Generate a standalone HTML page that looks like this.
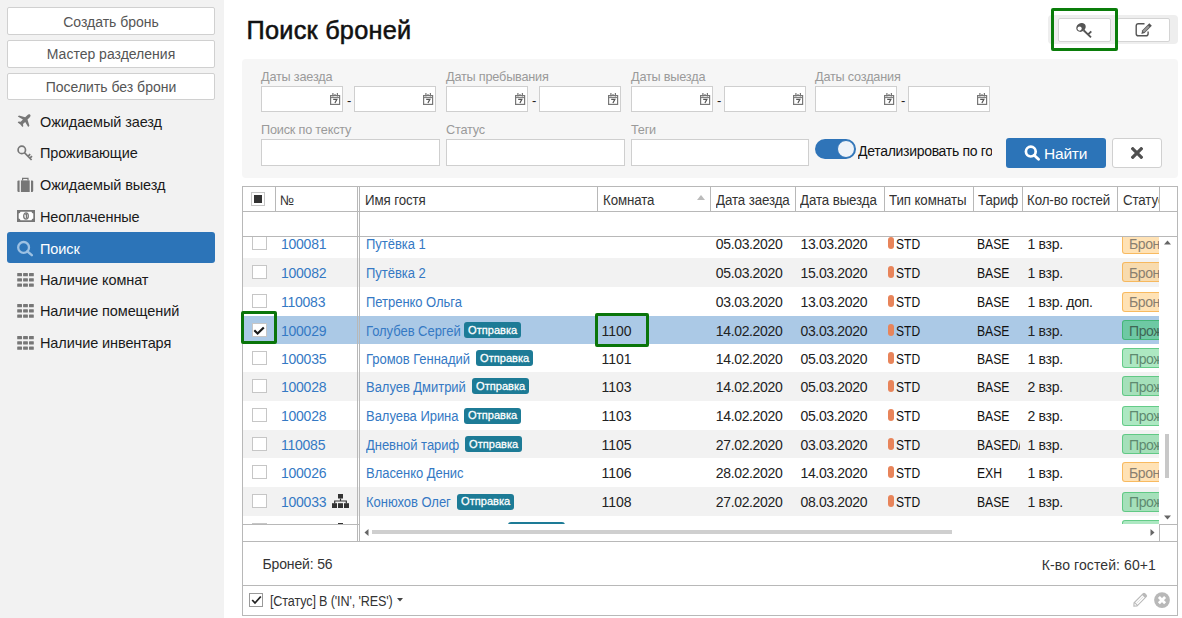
<!DOCTYPE html><html><head><meta charset="utf-8"><style>
html,body{margin:0;padding:0;}
body{width:1182px;height:618px;overflow:hidden;position:relative;background:#fff;font-family:"Liberation Sans",sans-serif;}
.t{position:absolute;white-space:nowrap;}
.b{position:absolute;box-sizing:border-box;}
svg{position:absolute;}
</style></head><body>
<div class="b" style="left:0px;top:0px;width:224px;height:618px;background:#f2f2f2"></div>
<div class="b" style="left:7px;top:7px;width:208px;height:28px;background:#fff;border:1px solid #d0d0d0;border-radius:2px"></div>
<div class="t" style="left:7px;width:208px;text-align:center;top:13.8px;font-size:14px;line-height:16px;color:#555">Создать бронь</div>
<div class="b" style="left:7px;top:40px;width:208px;height:28px;background:#fff;border:1px solid #d0d0d0;border-radius:2px"></div>
<div class="t" style="left:7px;width:208px;text-align:center;top:46.2px;font-size:14px;line-height:16px;color:#555">Мастер разделения</div>
<div class="b" style="left:7px;top:73px;width:208px;height:27px;background:#fff;border:1px solid #d0d0d0;border-radius:2px"></div>
<div class="t" style="left:7px;width:208px;text-align:center;top:78.6px;font-size:14px;line-height:16px;color:#555">Поселить без брони</div>
<div class="b" style="left:7px;top:232px;width:208px;height:31px;background:#2c74b8;border-radius:3px"></div>
<div class="t" style="left:40px;top:114px;font-size:14.5px;line-height:16px;color:#1a1a1a;font-weight:normal;letter-spacing:-0.1px;">Ожидаемый заезд</div>
<svg style="left:17px;top:114px" width="14" height="14" viewBox="0 0 14 14"><path fill="#777" d="M13.2 0.8 C12.4 0 11.2 0.3 10.3 1.2 L8.2 3.3 L2 1.4 L0.8 2.6 L5.9 5.6 L3.7 7.8 L1.6 7.5 L0.7 8.4 L3.4 10.4 L5.4 13.1 L6.3 12.2 L6 10.1 L8.2 7.9 L11.2 13 L12.4 11.8 L10.5 5.6 L12.6 3.5 C13.5 2.6 13.9 1.5 13.2 0.8Z"/></svg>
<div class="t" style="left:40px;top:145px;font-size:14.5px;line-height:16px;color:#1a1a1a;font-weight:normal;letter-spacing:-0.1px;">Проживающие</div>
<svg style="left:17px;top:145px" width="17" height="17" viewBox="0 0 17 17"><circle cx="4.8" cy="4.9" r="3.7" fill="none" stroke="#777" stroke-width="1.7"/><path d="M7.4 7.6 L14.6 15 M11 11.3 L13.2 9.1 M12.9 13.2 L15 11.1" stroke="#777" stroke-width="1.7" fill="none"/></svg>
<div class="t" style="left:40px;top:177px;font-size:14.5px;line-height:16px;color:#1a1a1a;font-weight:normal;letter-spacing:-0.1px;">Ожидаемый выезд</div>
<svg style="left:17px;top:177px" width="17" height="16" viewBox="0 0 17 16"><path d="M5.6 3.6 V1.4 H11 V3.6" fill="none" stroke="#777" stroke-width="1.2"/><path d="M2.6 3.4 H1.6 Q0.4 3.4 0.4 4.6 V13.8 Q0.4 15 1.6 15 H2.6Z" fill="#777"/><rect x="3.9" y="3.4" width="8.8" height="11.6" fill="#777"/><path d="M14 3.4 H15 Q16.2 3.4 16.2 4.6 V13.8 Q16.2 15 15 15 H14Z" fill="#777"/></svg>
<div class="t" style="left:40px;top:209px;font-size:14.5px;line-height:16px;color:#1a1a1a;font-weight:normal;letter-spacing:-0.1px;">Неоплаченные</div>
<svg style="left:17px;top:210px" width="18" height="12" viewBox="0 0 18 12"><rect x="0" y="0" width="18" height="12" fill="#777"/><path d="M3.5 1.8 H14.5 Q14.8 3.2 16.3 3.5 V8.5 Q14.8 8.8 14.5 10.2 H3.5 Q3.2 8.8 1.7 8.5 V3.5 Q3.2 3.2 3.5 1.8Z" fill="#fff"/><ellipse cx="9" cy="6" rx="2.3" ry="3.1" fill="none" stroke="#777" stroke-width="1.3"/><path d="M8.3 4.6 L9.4 4 V8.2" stroke="#777" stroke-width="1.2" fill="none"/></svg>
<div class="t" style="left:40px;top:241px;font-size:14.5px;line-height:16px;color:#fff;font-weight:normal;letter-spacing:-0.1px;">Поиск</div>
<svg style="left:16px;top:240px" width="18" height="17" viewBox="0 0 18 17"><circle cx="7.6" cy="7.4" r="5.4" fill="none" stroke="#9dc1e3" stroke-width="2.3"/><path d="M11.4 11.3 L15.8 15.2" stroke="#9dc1e3" stroke-width="2.4" stroke-linecap="round"/></svg>
<div class="t" style="left:40px;top:272px;font-size:14.5px;line-height:16px;color:#1a1a1a;font-weight:normal;letter-spacing:-0.1px;">Наличие комнат</div>
<svg style="left:17px;top:272.7px" width="17" height="14" viewBox="0 0 17 14"><rect x="0.2" y="0" width="4.8" height="3.2" rx="0.5" fill="#777"/><rect x="0.2" y="5.3" width="4.8" height="3.2" rx="0.5" fill="#777"/><rect x="0.2" y="10.5" width="4.8" height="3.2" rx="0.5" fill="#777"/><rect x="6.1" y="0" width="4.8" height="3.2" rx="0.5" fill="#777"/><rect x="6.1" y="5.3" width="4.8" height="3.2" rx="0.5" fill="#777"/><rect x="6.1" y="10.5" width="4.8" height="3.2" rx="0.5" fill="#777"/><rect x="12" y="0" width="4.8" height="3.2" rx="0.5" fill="#777"/><rect x="12" y="5.3" width="4.8" height="3.2" rx="0.5" fill="#777"/><rect x="12" y="10.5" width="4.8" height="3.2" rx="0.5" fill="#777"/></svg>
<div class="t" style="left:40px;top:303px;font-size:14.5px;line-height:16px;color:#1a1a1a;font-weight:normal;letter-spacing:-0.1px;">Наличие помещений</div>
<svg style="left:17px;top:303.7px" width="17" height="14" viewBox="0 0 17 14"><rect x="0.2" y="0" width="4.8" height="3.2" rx="0.5" fill="#777"/><rect x="0.2" y="5.3" width="4.8" height="3.2" rx="0.5" fill="#777"/><rect x="0.2" y="10.5" width="4.8" height="3.2" rx="0.5" fill="#777"/><rect x="6.1" y="0" width="4.8" height="3.2" rx="0.5" fill="#777"/><rect x="6.1" y="5.3" width="4.8" height="3.2" rx="0.5" fill="#777"/><rect x="6.1" y="10.5" width="4.8" height="3.2" rx="0.5" fill="#777"/><rect x="12" y="0" width="4.8" height="3.2" rx="0.5" fill="#777"/><rect x="12" y="5.3" width="4.8" height="3.2" rx="0.5" fill="#777"/><rect x="12" y="10.5" width="4.8" height="3.2" rx="0.5" fill="#777"/></svg>
<div class="t" style="left:40px;top:335px;font-size:14.5px;line-height:16px;color:#1a1a1a;font-weight:normal;letter-spacing:-0.1px;">Наличие инвентаря</div>
<svg style="left:17px;top:335.7px" width="17" height="14" viewBox="0 0 17 14"><rect x="0.2" y="0" width="4.8" height="3.2" rx="0.5" fill="#777"/><rect x="0.2" y="5.3" width="4.8" height="3.2" rx="0.5" fill="#777"/><rect x="0.2" y="10.5" width="4.8" height="3.2" rx="0.5" fill="#777"/><rect x="6.1" y="0" width="4.8" height="3.2" rx="0.5" fill="#777"/><rect x="6.1" y="5.3" width="4.8" height="3.2" rx="0.5" fill="#777"/><rect x="6.1" y="10.5" width="4.8" height="3.2" rx="0.5" fill="#777"/><rect x="12" y="0" width="4.8" height="3.2" rx="0.5" fill="#777"/><rect x="12" y="5.3" width="4.8" height="3.2" rx="0.5" fill="#777"/><rect x="12" y="10.5" width="4.8" height="3.2" rx="0.5" fill="#777"/></svg>
<div class="t" style="left:246.5px;top:15.799999999999997px;font-size:25.3px;line-height:28px;color:#111;font-weight:normal;letter-spacing:0.25px;-webkit-text-stroke:0.55px #111">Поиск броней</div>
<div class="b" style="left:1048px;top:15px;width:130px;height:29px;background:#eeeeee;border-radius:4px"></div>
<div class="b" style="left:1058px;top:18px;width:53px;height:24px;background:#fff;border:1px solid #d4d4d4;border-radius:2px"></div>
<div class="b" style="left:1117px;top:18px;width:53px;height:24px;background:#fff;border:1px solid #d4d4d4;border-radius:2px"></div>
<svg style="left:1074px;top:21px" width="19" height="18" viewBox="0 0 19 18"><ellipse cx="7" cy="6.4" rx="5" ry="4.2" transform="rotate(-35 7 6.4)" fill="#555"/><circle cx="5.6" cy="7.6" r="2.1" fill="#fff"/><path d="M9.6 9.2 L17 16.4 M14.4 13.2 L17.3 10.3" stroke="#555" stroke-width="1.9" fill="none"/></svg>
<svg style="left:1135px;top:22px" width="18" height="16" viewBox="0 0 18 16"><path d="M9.5 1.8 H3.3 Q1.2 1.8 1.2 3.9 V11.7 Q1.2 13.8 3.3 13.8 H11 Q13.1 13.8 13.1 11.7 V9.5" fill="none" stroke="#555" stroke-width="1.4"/><path d="M14.3 1.2 L16.8 3.7 L9.6 10.9 L6.4 12 L7.1 8.4Z" fill="#555"/><path d="M13.1 3.5 L14.6 5 L9 10.6 L7.5 9.1Z" fill="#999"/></svg>
<div class="b" style="left:1051px;top:8px;width:67px;height:43px;border:3px solid #0a7d0a;border-radius:2px"></div>
<div class="b" style="left:242px;top:59px;width:936px;height:119px;background:#f6f6f6;border-radius:4px"></div>
<div class="t" style="left:261px;top:69.8px;font-size:12.7px;line-height:14px;color:#9a9a9a;font-weight:normal;letter-spacing:-0.2px;">Даты заезда</div>
<div class="b" style="left:261px;top:86px;width:82px;height:26px;background:#fff;border:1px solid #cfcfcf"></div>
<svg style="left:330px;top:93px" width="11" height="12" viewBox="0 0 11 12"><rect x="0.6" y="2.6" width="9" height="8.8" fill="none" stroke="#777" stroke-width="1.2"/><line x1="0.6" y1="4.6" x2="9.6" y2="4.6" stroke="#777" stroke-width="1"/><rect x="2.3" y="0" width="1.2" height="3.5" fill="#777"/><rect x="6.8" y="0" width="1.2" height="3.5" fill="#777"/><rect x="4.3" y="1.2" width="1.4" height="1.8" fill="#777"/><path d="M3.2 6.3 H6.9 L4.9 10" fill="none" stroke="#555" stroke-width="1.2"/></svg>
<div class="t" style="left:347px;top:93px;font-size:13px;line-height:15px;color:#222;font-weight:normal;letter-spacing:0px;">-</div>
<div class="b" style="left:354px;top:86px;width:82px;height:26px;background:#fff;border:1px solid #cfcfcf"></div>
<svg style="left:423px;top:93px" width="11" height="12" viewBox="0 0 11 12"><rect x="0.6" y="2.6" width="9" height="8.8" fill="none" stroke="#777" stroke-width="1.2"/><line x1="0.6" y1="4.6" x2="9.6" y2="4.6" stroke="#777" stroke-width="1"/><rect x="2.3" y="0" width="1.2" height="3.5" fill="#777"/><rect x="6.8" y="0" width="1.2" height="3.5" fill="#777"/><rect x="4.3" y="1.2" width="1.4" height="1.8" fill="#777"/><path d="M3.2 6.3 H6.9 L4.9 10" fill="none" stroke="#555" stroke-width="1.2"/></svg>
<div class="t" style="left:446px;top:69.8px;font-size:12.7px;line-height:14px;color:#9a9a9a;font-weight:normal;letter-spacing:-0.2px;">Даты пребывания</div>
<div class="b" style="left:446px;top:86px;width:82px;height:26px;background:#fff;border:1px solid #cfcfcf"></div>
<svg style="left:515px;top:93px" width="11" height="12" viewBox="0 0 11 12"><rect x="0.6" y="2.6" width="9" height="8.8" fill="none" stroke="#777" stroke-width="1.2"/><line x1="0.6" y1="4.6" x2="9.6" y2="4.6" stroke="#777" stroke-width="1"/><rect x="2.3" y="0" width="1.2" height="3.5" fill="#777"/><rect x="6.8" y="0" width="1.2" height="3.5" fill="#777"/><rect x="4.3" y="1.2" width="1.4" height="1.8" fill="#777"/><path d="M3.2 6.3 H6.9 L4.9 10" fill="none" stroke="#555" stroke-width="1.2"/></svg>
<div class="t" style="left:532px;top:93px;font-size:13px;line-height:15px;color:#222;font-weight:normal;letter-spacing:0px;">-</div>
<div class="b" style="left:539px;top:86px;width:82px;height:26px;background:#fff;border:1px solid #cfcfcf"></div>
<svg style="left:608px;top:93px" width="11" height="12" viewBox="0 0 11 12"><rect x="0.6" y="2.6" width="9" height="8.8" fill="none" stroke="#777" stroke-width="1.2"/><line x1="0.6" y1="4.6" x2="9.6" y2="4.6" stroke="#777" stroke-width="1"/><rect x="2.3" y="0" width="1.2" height="3.5" fill="#777"/><rect x="6.8" y="0" width="1.2" height="3.5" fill="#777"/><rect x="4.3" y="1.2" width="1.4" height="1.8" fill="#777"/><path d="M3.2 6.3 H6.9 L4.9 10" fill="none" stroke="#555" stroke-width="1.2"/></svg>
<div class="t" style="left:631px;top:69.8px;font-size:12.7px;line-height:14px;color:#9a9a9a;font-weight:normal;letter-spacing:-0.2px;">Даты выезда</div>
<div class="b" style="left:631px;top:86px;width:82px;height:26px;background:#fff;border:1px solid #cfcfcf"></div>
<svg style="left:700px;top:93px" width="11" height="12" viewBox="0 0 11 12"><rect x="0.6" y="2.6" width="9" height="8.8" fill="none" stroke="#777" stroke-width="1.2"/><line x1="0.6" y1="4.6" x2="9.6" y2="4.6" stroke="#777" stroke-width="1"/><rect x="2.3" y="0" width="1.2" height="3.5" fill="#777"/><rect x="6.8" y="0" width="1.2" height="3.5" fill="#777"/><rect x="4.3" y="1.2" width="1.4" height="1.8" fill="#777"/><path d="M3.2 6.3 H6.9 L4.9 10" fill="none" stroke="#555" stroke-width="1.2"/></svg>
<div class="t" style="left:717px;top:93px;font-size:13px;line-height:15px;color:#222;font-weight:normal;letter-spacing:0px;">-</div>
<div class="b" style="left:724px;top:86px;width:82px;height:26px;background:#fff;border:1px solid #cfcfcf"></div>
<svg style="left:793px;top:93px" width="11" height="12" viewBox="0 0 11 12"><rect x="0.6" y="2.6" width="9" height="8.8" fill="none" stroke="#777" stroke-width="1.2"/><line x1="0.6" y1="4.6" x2="9.6" y2="4.6" stroke="#777" stroke-width="1"/><rect x="2.3" y="0" width="1.2" height="3.5" fill="#777"/><rect x="6.8" y="0" width="1.2" height="3.5" fill="#777"/><rect x="4.3" y="1.2" width="1.4" height="1.8" fill="#777"/><path d="M3.2 6.3 H6.9 L4.9 10" fill="none" stroke="#555" stroke-width="1.2"/></svg>
<div class="t" style="left:815px;top:69.8px;font-size:12.7px;line-height:14px;color:#9a9a9a;font-weight:normal;letter-spacing:-0.2px;">Даты создания</div>
<div class="b" style="left:815px;top:86px;width:82px;height:26px;background:#fff;border:1px solid #cfcfcf"></div>
<svg style="left:884px;top:93px" width="11" height="12" viewBox="0 0 11 12"><rect x="0.6" y="2.6" width="9" height="8.8" fill="none" stroke="#777" stroke-width="1.2"/><line x1="0.6" y1="4.6" x2="9.6" y2="4.6" stroke="#777" stroke-width="1"/><rect x="2.3" y="0" width="1.2" height="3.5" fill="#777"/><rect x="6.8" y="0" width="1.2" height="3.5" fill="#777"/><rect x="4.3" y="1.2" width="1.4" height="1.8" fill="#777"/><path d="M3.2 6.3 H6.9 L4.9 10" fill="none" stroke="#555" stroke-width="1.2"/></svg>
<div class="t" style="left:901px;top:93px;font-size:13px;line-height:15px;color:#222;font-weight:normal;letter-spacing:0px;">-</div>
<div class="b" style="left:908px;top:86px;width:82px;height:26px;background:#fff;border:1px solid #cfcfcf"></div>
<svg style="left:977px;top:93px" width="11" height="12" viewBox="0 0 11 12"><rect x="0.6" y="2.6" width="9" height="8.8" fill="none" stroke="#777" stroke-width="1.2"/><line x1="0.6" y1="4.6" x2="9.6" y2="4.6" stroke="#777" stroke-width="1"/><rect x="2.3" y="0" width="1.2" height="3.5" fill="#777"/><rect x="6.8" y="0" width="1.2" height="3.5" fill="#777"/><rect x="4.3" y="1.2" width="1.4" height="1.8" fill="#777"/><path d="M3.2 6.3 H6.9 L4.9 10" fill="none" stroke="#555" stroke-width="1.2"/></svg>
<div class="t" style="left:261px;top:123px;font-size:12.7px;line-height:14px;color:#9a9a9a;font-weight:normal;letter-spacing:-0.2px;">Поиск по тексту</div>
<div class="b" style="left:261px;top:139px;width:179px;height:27px;background:#fff;border:1px solid #cfcfcf"></div>
<div class="t" style="left:446px;top:123px;font-size:12.7px;line-height:14px;color:#9a9a9a;font-weight:normal;letter-spacing:-0.2px;">Статус</div>
<div class="b" style="left:446px;top:139px;width:179px;height:27px;background:#fff;border:1px solid #cfcfcf"></div>
<div class="t" style="left:631px;top:123px;font-size:12.7px;line-height:14px;color:#9a9a9a;font-weight:normal;letter-spacing:-0.2px;">Теги</div>
<div class="b" style="left:631px;top:139px;width:178px;height:27px;background:#fff;border:1px solid #cfcfcf"></div>
<div class="b" style="left:815px;top:139px;width:41px;height:20px;background:#2f74b8;border-radius:10px"></div>
<div class="b" style="left:837px;top:140px;width:18px;height:18px;background:#eef3f9;border-radius:50%;border:1px solid #2f74b8"></div>
<div class="t" style="left:858px;top:143px;width:134px;overflow:hidden;font-size:14px;line-height:16px;color:#111;letter-spacing:-0.3px">Детализировать по город</div>
<div class="b" style="left:1006px;top:138px;width:100px;height:30px;background:#2c74b8;border-radius:3px"></div>
<svg style="left:1024px;top:145px" width="16" height="16" viewBox="0 0 16 16"><circle cx="6.8" cy="6.6" r="4.9" fill="none" stroke="#fff" stroke-width="2.7"/><path d="M10.2 10.2 L14.5 14.3" stroke="#fff" stroke-width="2.8" stroke-linecap="round"/></svg>
<div class="t" style="left:1044px;top:145px;font-size:15.5px;line-height:17px;color:#fff;font-weight:normal;letter-spacing:-0.2px;">Найти</div>
<div class="b" style="left:1112px;top:138px;width:50px;height:30px;background:#fff;border:1px solid #d0d0d0;border-radius:3px"></div>
<svg style="left:1131px;top:147px" width="12" height="12" viewBox="0 0 12 12"><path d="M1.8 1.8 L10.2 10.2 M10.2 1.8 L1.8 10.2" stroke="#505050" stroke-width="3.2" stroke-linecap="square"/></svg>
<div class="b" style="left:242px;top:186px;width:936px;height:430px;border:1px solid #b8b8b8"></div>
<div class="b" style="left:242px;top:211px;width:936px;height:1px;background:#b8b8b8"></div>
<div class="b" style="left:242px;top:236px;width:936px;height:1px;background:#b8b8b8"></div>
<div class="b" style="left:242px;top:541px;width:936px;height:1px;background:#b8b8b8"></div>
<div class="b" style="left:242px;top:585px;width:936px;height:1px;background:#b8b8b8"></div>
<div style="position:absolute;left:243px;top:237px;width:934px;height:287px;overflow:hidden">
<div class="b" style="left:9px;top:-1px;width:15px;height:14px;background:#fff;border:1px solid #c6c6c6"></div>
<div class="t" style="left:38px;top:-1.0999999999999943px;font-size:14px;line-height:16px;color:#3579c4;font-weight:normal;letter-spacing:-0.25px;">100081</div>
<div class="t" style="left:123px;top:-1.0999999999999943px;font-size:14px;line-height:16px;color:#3579c4;font-weight:normal;letter-spacing:-0.05px;transform:scaleX(0.93);transform-origin:0 0">Путёвка 1</div>
<div class="t" style="left:472.79999999999995px;top:-1.0999999999999943px;font-size:14px;line-height:16px;color:#222;font-weight:normal;letter-spacing:-0.35px;">05.03.2020</div>
<div class="t" style="left:557.5px;top:-1.0999999999999943px;font-size:14px;line-height:16px;color:#222;font-weight:normal;letter-spacing:-0.35px;">13.03.2020</div>
<div class="b" style="left:645px;top:0px;width:6px;height:12px;background:#e8845a;border-radius:3px"></div>
<div class="t" style="left:652.5px;top:-1.0999999999999943px;font-size:14px;line-height:16px;color:#111;font-weight:normal;letter-spacing:0px;transform:scaleX(0.86);transform-origin:0 0">STD</div>
<div style="position:absolute;left:734px;top:0;width:43px;height:600px;overflow:hidden">
<div class="t" style="left:0px;top:-1.0999999999999943px;font-size:14px;line-height:16px;color:#111;font-weight:normal;letter-spacing:0px;transform:scaleX(0.87);transform-origin:0 0">BASE</div>
</div>
<div class="t" style="left:784.5px;top:-1.0999999999999943px;font-size:14px;line-height:16px;color:#222;font-weight:normal;letter-spacing:-0.3px;">1 взр.</div>
<div style="position:absolute;left:879px;top:0;width:37px;height:600px;overflow:hidden">
<div class="b" style="left:0px;top:-3px;width:50px;height:20px;background:rgba(255,190,90,0.45);border:1px solid rgba(245,170,60,0.7);border-radius:3px"></div>
<div class="t" style="left:7px;top:-1.0999999999999943px;font-size:14px;line-height:16px;color:#8a8070;font-weight:normal;letter-spacing:-0.4px;">Брон</div>
</div>
<div class="b" style="left:0px;top:21px;width:916px;height:29px;background:#f2f2f2"></div>
<div class="b" style="left:9px;top:28px;width:15px;height:14px;background:#fff;border:1px solid #c6c6c6"></div>
<div class="t" style="left:38px;top:27.899999999999977px;font-size:14px;line-height:16px;color:#3579c4;font-weight:normal;letter-spacing:-0.25px;">100082</div>
<div class="t" style="left:123px;top:27.899999999999977px;font-size:14px;line-height:16px;color:#3579c4;font-weight:normal;letter-spacing:-0.05px;transform:scaleX(0.93);transform-origin:0 0">Путёвка 2</div>
<div class="t" style="left:472.79999999999995px;top:27.899999999999977px;font-size:14px;line-height:16px;color:#222;font-weight:normal;letter-spacing:-0.35px;">05.03.2020</div>
<div class="t" style="left:557.5px;top:27.899999999999977px;font-size:14px;line-height:16px;color:#222;font-weight:normal;letter-spacing:-0.35px;">15.03.2020</div>
<div class="b" style="left:645px;top:29px;width:6px;height:12px;background:#e8845a;border-radius:3px"></div>
<div class="t" style="left:652.5px;top:27.899999999999977px;font-size:14px;line-height:16px;color:#111;font-weight:normal;letter-spacing:0px;transform:scaleX(0.86);transform-origin:0 0">STD</div>
<div style="position:absolute;left:734px;top:0;width:43px;height:600px;overflow:hidden">
<div class="t" style="left:0px;top:27.899999999999977px;font-size:14px;line-height:16px;color:#111;font-weight:normal;letter-spacing:0px;transform:scaleX(0.87);transform-origin:0 0">BASE</div>
</div>
<div class="t" style="left:784.5px;top:27.899999999999977px;font-size:14px;line-height:16px;color:#222;font-weight:normal;letter-spacing:-0.3px;">1 взр.</div>
<div style="position:absolute;left:879px;top:0;width:37px;height:600px;overflow:hidden">
<div class="b" style="left:0px;top:25px;width:50px;height:20px;background:rgba(255,190,90,0.45);border:1px solid rgba(245,170,60,0.7);border-radius:3px"></div>
<div class="t" style="left:7px;top:27.899999999999977px;font-size:14px;line-height:16px;color:#8a8070;font-weight:normal;letter-spacing:-0.4px;">Брон</div>
</div>
<div class="b" style="left:9px;top:57px;width:15px;height:14px;background:#fff;border:1px solid #c6c6c6"></div>
<div class="t" style="left:38px;top:56.89999999999998px;font-size:14px;line-height:16px;color:#3579c4;font-weight:normal;letter-spacing:-0.25px;">110083</div>
<div class="t" style="left:123px;top:56.89999999999998px;font-size:14px;line-height:16px;color:#3579c4;font-weight:normal;letter-spacing:-0.05px;transform:scaleX(0.93);transform-origin:0 0">Петренко Ольга</div>
<div class="t" style="left:472.79999999999995px;top:56.89999999999998px;font-size:14px;line-height:16px;color:#222;font-weight:normal;letter-spacing:-0.35px;">03.03.2020</div>
<div class="t" style="left:557.5px;top:56.89999999999998px;font-size:14px;line-height:16px;color:#222;font-weight:normal;letter-spacing:-0.35px;">13.03.2020</div>
<div class="b" style="left:645px;top:58px;width:6px;height:12px;background:#e8845a;border-radius:3px"></div>
<div class="t" style="left:652.5px;top:56.89999999999998px;font-size:14px;line-height:16px;color:#111;font-weight:normal;letter-spacing:0px;transform:scaleX(0.86);transform-origin:0 0">STD</div>
<div style="position:absolute;left:734px;top:0;width:43px;height:600px;overflow:hidden">
<div class="t" style="left:0px;top:56.89999999999998px;font-size:14px;line-height:16px;color:#111;font-weight:normal;letter-spacing:0px;transform:scaleX(0.87);transform-origin:0 0">BASE</div>
</div>
<div class="t" style="left:784.5px;top:56.89999999999998px;font-size:14px;line-height:16px;color:#222;font-weight:normal;letter-spacing:-0.3px;">1 взр. доп.</div>
<div style="position:absolute;left:879px;top:0;width:37px;height:600px;overflow:hidden">
<div class="b" style="left:0px;top:55px;width:50px;height:20px;background:rgba(255,190,90,0.45);border:1px solid rgba(245,170,60,0.7);border-radius:3px"></div>
<div class="t" style="left:7px;top:56.89999999999998px;font-size:14px;line-height:16px;color:#8a8070;font-weight:normal;letter-spacing:-0.4px;">Брон</div>
</div>
<div class="b" style="left:0px;top:79px;width:916px;height:28px;background:#abc9e6"></div>
<div class="b" style="left:9px;top:86px;width:15px;height:14px;background:#fff;border:1px solid #c6c6c6"></div>
<svg style="left:10px;top:88px" width="12" height="11" viewBox="0 0 12 11"><path d="M1.3 5.2 L4.6 8.6 L10.8 2.4" fill="none" stroke="#1a1a1a" stroke-width="2.1"/></svg>
<div class="t" style="left:38px;top:85.89999999999998px;font-size:14px;line-height:16px;color:#3579c4;font-weight:normal;letter-spacing:-0.25px;">100029</div>
<div class="t" style="left:123px;top:85.89999999999998px;font-size:14px;line-height:16px;color:#3579c4;font-weight:normal;letter-spacing:-0.05px;transform:scaleX(0.93);transform-origin:0 0">Голубев Сергей</div>
<div class="b" style="left:221px;top:85px;width:57px;height:16px;background:#1d7b96;border-radius:3px"></div>
<div class="t" style="left:225px;top:86.29999999999995px;font-size:11.8px;line-height:14px;color:#fff;font-weight:normal;letter-spacing:0px;-webkit-text-stroke:0.3px #fff;transform:scaleX(0.94);transform-origin:0 0">Отправка</div>
<div class="t" style="left:358.5px;top:85.89999999999998px;font-size:14px;line-height:16px;color:#222;font-weight:normal;letter-spacing:0px;">1100</div>
<div class="t" style="left:472.79999999999995px;top:85.89999999999998px;font-size:14px;line-height:16px;color:#222;font-weight:normal;letter-spacing:-0.35px;">14.02.2020</div>
<div class="t" style="left:557.5px;top:85.89999999999998px;font-size:14px;line-height:16px;color:#222;font-weight:normal;letter-spacing:-0.35px;">03.03.2020</div>
<div class="b" style="left:645px;top:87px;width:6px;height:12px;background:#e8845a;border-radius:3px"></div>
<div class="t" style="left:652.5px;top:85.89999999999998px;font-size:14px;line-height:16px;color:#111;font-weight:normal;letter-spacing:0px;transform:scaleX(0.86);transform-origin:0 0">STD</div>
<div style="position:absolute;left:734px;top:0;width:43px;height:600px;overflow:hidden">
<div class="t" style="left:0px;top:85.89999999999998px;font-size:14px;line-height:16px;color:#111;font-weight:normal;letter-spacing:0px;transform:scaleX(0.87);transform-origin:0 0">BASE</div>
</div>
<div class="t" style="left:784.5px;top:85.89999999999998px;font-size:14px;line-height:16px;color:#222;font-weight:normal;letter-spacing:-0.3px;">1 взр.</div>
<div style="position:absolute;left:879px;top:0;width:37px;height:600px;overflow:hidden">
<div class="b" style="left:0px;top:83px;width:50px;height:20px;background:rgba(60,200,110,0.55);border:1px solid rgba(40,170,90,0.6);border-radius:3px"></div>
<div class="t" style="left:7px;top:85.89999999999998px;font-size:14px;line-height:16px;color:#3f6655;font-weight:normal;letter-spacing:-0.4px;">Прож</div>
</div>
<div class="b" style="left:9px;top:114px;width:15px;height:14px;background:#fff;border:1px solid #c6c6c6"></div>
<div class="t" style="left:38px;top:113.89999999999998px;font-size:14px;line-height:16px;color:#3579c4;font-weight:normal;letter-spacing:-0.25px;">100035</div>
<div class="t" style="left:123px;top:113.89999999999998px;font-size:14px;line-height:16px;color:#3579c4;font-weight:normal;letter-spacing:-0.05px;transform:scaleX(0.93);transform-origin:0 0">Громов Геннадий</div>
<div class="b" style="left:233px;top:113px;width:57px;height:16px;background:#1d7b96;border-radius:3px"></div>
<div class="t" style="left:237px;top:114.29999999999995px;font-size:11.8px;line-height:14px;color:#fff;font-weight:normal;letter-spacing:0px;-webkit-text-stroke:0.3px #fff;transform:scaleX(0.94);transform-origin:0 0">Отправка</div>
<div class="t" style="left:358.5px;top:113.89999999999998px;font-size:14px;line-height:16px;color:#222;font-weight:normal;letter-spacing:0px;">1101</div>
<div class="t" style="left:472.79999999999995px;top:113.89999999999998px;font-size:14px;line-height:16px;color:#222;font-weight:normal;letter-spacing:-0.35px;">14.02.2020</div>
<div class="t" style="left:557.5px;top:113.89999999999998px;font-size:14px;line-height:16px;color:#222;font-weight:normal;letter-spacing:-0.35px;">05.03.2020</div>
<div class="b" style="left:645px;top:115px;width:6px;height:12px;background:#e8845a;border-radius:3px"></div>
<div class="t" style="left:652.5px;top:113.89999999999998px;font-size:14px;line-height:16px;color:#111;font-weight:normal;letter-spacing:0px;transform:scaleX(0.86);transform-origin:0 0">STD</div>
<div style="position:absolute;left:734px;top:0;width:43px;height:600px;overflow:hidden">
<div class="t" style="left:0px;top:113.89999999999998px;font-size:14px;line-height:16px;color:#111;font-weight:normal;letter-spacing:0px;transform:scaleX(0.87);transform-origin:0 0">BASE</div>
</div>
<div class="t" style="left:784.5px;top:113.89999999999998px;font-size:14px;line-height:16px;color:#222;font-weight:normal;letter-spacing:-0.3px;">1 взр.</div>
<div style="position:absolute;left:879px;top:0;width:37px;height:600px;overflow:hidden">
<div class="b" style="left:0px;top:111px;width:50px;height:20px;background:rgba(60,200,110,0.42);border:1px solid rgba(40,180,90,0.55);border-radius:3px"></div>
<div class="t" style="left:7px;top:113.89999999999998px;font-size:14px;line-height:16px;color:#5e8a70;font-weight:normal;letter-spacing:-0.4px;">Прож</div>
</div>
<div class="b" style="left:0px;top:135px;width:916px;height:29px;background:#f2f2f2"></div>
<div class="b" style="left:9px;top:142px;width:15px;height:14px;background:#fff;border:1px solid #c6c6c6"></div>
<div class="t" style="left:38px;top:141.89999999999998px;font-size:14px;line-height:16px;color:#3579c4;font-weight:normal;letter-spacing:-0.25px;">100028</div>
<div class="t" style="left:123px;top:141.89999999999998px;font-size:14px;line-height:16px;color:#3579c4;font-weight:normal;letter-spacing:-0.05px;transform:scaleX(0.93);transform-origin:0 0">Валуев Дмитрий</div>
<div class="b" style="left:229px;top:141px;width:57px;height:16px;background:#1d7b96;border-radius:3px"></div>
<div class="t" style="left:233px;top:142.29999999999995px;font-size:11.8px;line-height:14px;color:#fff;font-weight:normal;letter-spacing:0px;-webkit-text-stroke:0.3px #fff;transform:scaleX(0.94);transform-origin:0 0">Отправка</div>
<div class="t" style="left:358.5px;top:141.89999999999998px;font-size:14px;line-height:16px;color:#222;font-weight:normal;letter-spacing:0px;">1103</div>
<div class="t" style="left:472.79999999999995px;top:141.89999999999998px;font-size:14px;line-height:16px;color:#222;font-weight:normal;letter-spacing:-0.35px;">14.02.2020</div>
<div class="t" style="left:557.5px;top:141.89999999999998px;font-size:14px;line-height:16px;color:#222;font-weight:normal;letter-spacing:-0.35px;">05.03.2020</div>
<div class="b" style="left:645px;top:143px;width:6px;height:12px;background:#e8845a;border-radius:3px"></div>
<div class="t" style="left:652.5px;top:141.89999999999998px;font-size:14px;line-height:16px;color:#111;font-weight:normal;letter-spacing:0px;transform:scaleX(0.86);transform-origin:0 0">STD</div>
<div style="position:absolute;left:734px;top:0;width:43px;height:600px;overflow:hidden">
<div class="t" style="left:0px;top:141.89999999999998px;font-size:14px;line-height:16px;color:#111;font-weight:normal;letter-spacing:0px;transform:scaleX(0.87);transform-origin:0 0">BASE</div>
</div>
<div class="t" style="left:784.5px;top:141.89999999999998px;font-size:14px;line-height:16px;color:#222;font-weight:normal;letter-spacing:-0.3px;">2 взр.</div>
<div style="position:absolute;left:879px;top:0;width:37px;height:600px;overflow:hidden">
<div class="b" style="left:0px;top:139px;width:50px;height:20px;background:rgba(60,200,110,0.42);border:1px solid rgba(40,180,90,0.55);border-radius:3px"></div>
<div class="t" style="left:7px;top:141.89999999999998px;font-size:14px;line-height:16px;color:#5e8a70;font-weight:normal;letter-spacing:-0.4px;">Прож</div>
</div>
<div class="b" style="left:9px;top:171px;width:15px;height:14px;background:#fff;border:1px solid #c6c6c6"></div>
<div class="t" style="left:38px;top:170.89999999999998px;font-size:14px;line-height:16px;color:#3579c4;font-weight:normal;letter-spacing:-0.25px;">100028</div>
<div class="t" style="left:123px;top:170.89999999999998px;font-size:14px;line-height:16px;color:#3579c4;font-weight:normal;letter-spacing:-0.05px;transform:scaleX(0.93);transform-origin:0 0">Валуева Ирина</div>
<div class="b" style="left:221px;top:171px;width:57px;height:16px;background:#1d7b96;border-radius:3px"></div>
<div class="t" style="left:225px;top:171.29999999999995px;font-size:11.8px;line-height:14px;color:#fff;font-weight:normal;letter-spacing:0px;-webkit-text-stroke:0.3px #fff;transform:scaleX(0.94);transform-origin:0 0">Отправка</div>
<div class="t" style="left:358.5px;top:170.89999999999998px;font-size:14px;line-height:16px;color:#222;font-weight:normal;letter-spacing:0px;">1103</div>
<div class="t" style="left:472.79999999999995px;top:170.89999999999998px;font-size:14px;line-height:16px;color:#222;font-weight:normal;letter-spacing:-0.35px;">14.02.2020</div>
<div class="t" style="left:557.5px;top:170.89999999999998px;font-size:14px;line-height:16px;color:#222;font-weight:normal;letter-spacing:-0.35px;">05.03.2020</div>
<div class="b" style="left:645px;top:172px;width:6px;height:12px;background:#e8845a;border-radius:3px"></div>
<div class="t" style="left:652.5px;top:170.89999999999998px;font-size:14px;line-height:16px;color:#111;font-weight:normal;letter-spacing:0px;transform:scaleX(0.86);transform-origin:0 0">STD</div>
<div style="position:absolute;left:734px;top:0;width:43px;height:600px;overflow:hidden">
<div class="t" style="left:0px;top:170.89999999999998px;font-size:14px;line-height:16px;color:#111;font-weight:normal;letter-spacing:0px;transform:scaleX(0.87);transform-origin:0 0">BASE</div>
</div>
<div class="t" style="left:784.5px;top:170.89999999999998px;font-size:14px;line-height:16px;color:#222;font-weight:normal;letter-spacing:-0.3px;">2 взр.</div>
<div style="position:absolute;left:879px;top:0;width:37px;height:600px;overflow:hidden">
<div class="b" style="left:0px;top:169px;width:50px;height:20px;background:rgba(60,200,110,0.42);border:1px solid rgba(40,180,90,0.55);border-radius:3px"></div>
<div class="t" style="left:7px;top:170.89999999999998px;font-size:14px;line-height:16px;color:#5e8a70;font-weight:normal;letter-spacing:-0.4px;">Прож</div>
</div>
<div class="b" style="left:0px;top:193px;width:916px;height:28px;background:#f2f2f2"></div>
<div class="b" style="left:9px;top:200px;width:15px;height:14px;background:#fff;border:1px solid #c6c6c6"></div>
<div class="t" style="left:38px;top:199.89999999999998px;font-size:14px;line-height:16px;color:#3579c4;font-weight:normal;letter-spacing:-0.25px;">110085</div>
<div class="t" style="left:123px;top:199.89999999999998px;font-size:14px;line-height:16px;color:#3579c4;font-weight:normal;letter-spacing:-0.05px;transform:scaleX(0.93);transform-origin:0 0">Дневной тариф</div>
<div class="b" style="left:222px;top:199px;width:57px;height:16px;background:#1d7b96;border-radius:3px"></div>
<div class="t" style="left:226px;top:200.29999999999995px;font-size:11.8px;line-height:14px;color:#fff;font-weight:normal;letter-spacing:0px;-webkit-text-stroke:0.3px #fff;transform:scaleX(0.94);transform-origin:0 0">Отправка</div>
<div class="t" style="left:358.5px;top:199.89999999999998px;font-size:14px;line-height:16px;color:#222;font-weight:normal;letter-spacing:0px;">1105</div>
<div class="t" style="left:472.79999999999995px;top:199.89999999999998px;font-size:14px;line-height:16px;color:#222;font-weight:normal;letter-spacing:-0.35px;">27.02.2020</div>
<div class="t" style="left:557.5px;top:199.89999999999998px;font-size:14px;line-height:16px;color:#222;font-weight:normal;letter-spacing:-0.35px;">03.03.2020</div>
<div class="b" style="left:645px;top:201px;width:6px;height:12px;background:#e8845a;border-radius:3px"></div>
<div class="t" style="left:652.5px;top:199.89999999999998px;font-size:14px;line-height:16px;color:#111;font-weight:normal;letter-spacing:0px;transform:scaleX(0.86);transform-origin:0 0">STD</div>
<div style="position:absolute;left:734px;top:0;width:43px;height:600px;overflow:hidden">
<div class="t" style="left:0px;top:199.89999999999998px;font-size:14px;line-height:16px;color:#111;font-weight:normal;letter-spacing:0px;transform:scaleX(0.87);transform-origin:0 0">BASED/A</div>
</div>
<div class="t" style="left:784.5px;top:199.89999999999998px;font-size:14px;line-height:16px;color:#222;font-weight:normal;letter-spacing:-0.3px;">1 взр.</div>
<div style="position:absolute;left:879px;top:0;width:37px;height:600px;overflow:hidden">
<div class="b" style="left:0px;top:197px;width:50px;height:20px;background:rgba(60,200,110,0.42);border:1px solid rgba(40,180,90,0.55);border-radius:3px"></div>
<div class="t" style="left:7px;top:199.89999999999998px;font-size:14px;line-height:16px;color:#5e8a70;font-weight:normal;letter-spacing:-0.4px;">Прож</div>
</div>
<div class="b" style="left:9px;top:228px;width:15px;height:14px;background:#fff;border:1px solid #c6c6c6"></div>
<div class="t" style="left:38px;top:227.89999999999998px;font-size:14px;line-height:16px;color:#3579c4;font-weight:normal;letter-spacing:-0.25px;">100026</div>
<div class="t" style="left:123px;top:227.89999999999998px;font-size:14px;line-height:16px;color:#3579c4;font-weight:normal;letter-spacing:-0.05px;transform:scaleX(0.93);transform-origin:0 0">Власенко Денис</div>
<div class="t" style="left:358.5px;top:227.89999999999998px;font-size:14px;line-height:16px;color:#222;font-weight:normal;letter-spacing:0px;">1106</div>
<div class="t" style="left:472.79999999999995px;top:227.89999999999998px;font-size:14px;line-height:16px;color:#222;font-weight:normal;letter-spacing:-0.35px;">28.02.2020</div>
<div class="t" style="left:557.5px;top:227.89999999999998px;font-size:14px;line-height:16px;color:#222;font-weight:normal;letter-spacing:-0.35px;">14.03.2020</div>
<div class="b" style="left:645px;top:229px;width:6px;height:12px;background:#e8845a;border-radius:3px"></div>
<div class="t" style="left:652.5px;top:227.89999999999998px;font-size:14px;line-height:16px;color:#111;font-weight:normal;letter-spacing:0px;transform:scaleX(0.86);transform-origin:0 0">STD</div>
<div style="position:absolute;left:734px;top:0;width:43px;height:600px;overflow:hidden">
<div class="t" style="left:0px;top:227.89999999999998px;font-size:14px;line-height:16px;color:#111;font-weight:normal;letter-spacing:0px;transform:scaleX(0.87);transform-origin:0 0">EXH</div>
</div>
<div class="t" style="left:784.5px;top:227.89999999999998px;font-size:14px;line-height:16px;color:#222;font-weight:normal;letter-spacing:-0.3px;">1 взр.</div>
<div style="position:absolute;left:879px;top:0;width:37px;height:600px;overflow:hidden">
<div class="b" style="left:0px;top:225px;width:50px;height:20px;background:rgba(255,190,90,0.45);border:1px solid rgba(245,170,60,0.7);border-radius:3px"></div>
<div class="t" style="left:7px;top:227.89999999999998px;font-size:14px;line-height:16px;color:#8a8070;font-weight:normal;letter-spacing:-0.4px;">Брон</div>
</div>
<div class="b" style="left:0px;top:250px;width:916px;height:29px;background:#f2f2f2"></div>
<div class="b" style="left:9px;top:257px;width:15px;height:14px;background:#fff;border:1px solid #c6c6c6"></div>
<div class="t" style="left:38px;top:256.9px;font-size:14px;line-height:16px;color:#3579c4;font-weight:normal;letter-spacing:-0.25px;">100033</div>
<svg style="left:89px;top:257px" width="17" height="14" viewBox="0 0 17 14"><rect x="6" y="0" width="5" height="4.5" fill="#333"/><path d="M8.5 4.5 V7 M2.7 9.5 V7 H14.3 V9.5" stroke="#333" stroke-width="1.2" fill="none"/><rect x="0" y="9.2" width="5" height="4.8" fill="#333"/><rect x="6" y="9.2" width="5" height="4.8" fill="#333"/><rect x="12" y="9.2" width="5" height="4.8" fill="#333"/></svg>
<div class="t" style="left:123px;top:256.9px;font-size:14px;line-height:16px;color:#3579c4;font-weight:normal;letter-spacing:-0.05px;transform:scaleX(0.93);transform-origin:0 0">Конюхов Олег</div>
<div class="b" style="left:214px;top:257px;width:57px;height:16px;background:#1d7b96;border-radius:3px"></div>
<div class="t" style="left:218px;top:257.29999999999995px;font-size:11.8px;line-height:14px;color:#fff;font-weight:normal;letter-spacing:0px;-webkit-text-stroke:0.3px #fff;transform:scaleX(0.94);transform-origin:0 0">Отправка</div>
<div class="t" style="left:358.5px;top:256.9px;font-size:14px;line-height:16px;color:#222;font-weight:normal;letter-spacing:0px;">1108</div>
<div class="t" style="left:472.79999999999995px;top:256.9px;font-size:14px;line-height:16px;color:#222;font-weight:normal;letter-spacing:-0.35px;">27.02.2020</div>
<div class="t" style="left:557.5px;top:256.9px;font-size:14px;line-height:16px;color:#222;font-weight:normal;letter-spacing:-0.35px;">08.03.2020</div>
<div class="b" style="left:645px;top:258px;width:6px;height:12px;background:#e8845a;border-radius:3px"></div>
<div class="t" style="left:652.5px;top:256.9px;font-size:14px;line-height:16px;color:#111;font-weight:normal;letter-spacing:0px;transform:scaleX(0.86);transform-origin:0 0">STD</div>
<div style="position:absolute;left:734px;top:0;width:43px;height:600px;overflow:hidden">
<div class="t" style="left:0px;top:256.9px;font-size:14px;line-height:16px;color:#111;font-weight:normal;letter-spacing:0px;transform:scaleX(0.87);transform-origin:0 0">BASE</div>
</div>
<div class="t" style="left:784.5px;top:256.9px;font-size:14px;line-height:16px;color:#222;font-weight:normal;letter-spacing:-0.3px;">1 взр.</div>
<div style="position:absolute;left:879px;top:0;width:37px;height:600px;overflow:hidden">
<div class="b" style="left:0px;top:255px;width:50px;height:20px;background:rgba(60,200,110,0.42);border:1px solid rgba(40,180,90,0.55);border-radius:3px"></div>
<div class="t" style="left:7px;top:256.9px;font-size:14px;line-height:16px;color:#5e8a70;font-weight:normal;letter-spacing:-0.4px;">Прож</div>
</div>
<div class="b" style="left:9px;top:286px;width:15px;height:14px;background:#fff;border:1px solid #c6c6c6"></div>
<div class="t" style="left:38px;top:285.9px;font-size:14px;line-height:16px;color:#3579c4;font-weight:normal;letter-spacing:-0.25px;">100034</div>
<svg style="left:89px;top:286px" width="17" height="14" viewBox="0 0 17 14"><rect x="6" y="0" width="5" height="4.5" fill="#333"/><path d="M8.5 4.5 V7 M2.7 9.5 V7 H14.3 V9.5" stroke="#333" stroke-width="1.2" fill="none"/><rect x="0" y="9.2" width="5" height="4.8" fill="#333"/><rect x="6" y="9.2" width="5" height="4.8" fill="#333"/><rect x="12" y="9.2" width="5" height="4.8" fill="#333"/></svg>
<div class="t" style="left:123px;top:285.9px;font-size:14px;line-height:16px;color:#3579c4;font-weight:normal;letter-spacing:-0.05px;transform:scaleX(0.93);transform-origin:0 0">Конюхова Анна</div>
<div class="b" style="left:265px;top:285px;width:57px;height:16px;background:#1d7b96;border-radius:3px"></div>
<div class="t" style="left:269px;top:286.29999999999995px;font-size:11.8px;line-height:14px;color:#fff;font-weight:normal;letter-spacing:0px;-webkit-text-stroke:0.3px #fff;transform:scaleX(0.94);transform-origin:0 0">Отправка</div>
<div class="t" style="left:358.5px;top:285.9px;font-size:14px;line-height:16px;color:#222;font-weight:normal;letter-spacing:0px;">1108</div>
<div class="t" style="left:472.79999999999995px;top:285.9px;font-size:14px;line-height:16px;color:#222;font-weight:normal;letter-spacing:-0.35px;">27.02.2020</div>
<div class="t" style="left:557.5px;top:285.9px;font-size:14px;line-height:16px;color:#222;font-weight:normal;letter-spacing:-0.35px;">08.03.2020</div>
<div class="b" style="left:645px;top:287px;width:6px;height:12px;background:#e8845a;border-radius:3px"></div>
<div class="t" style="left:652.5px;top:285.9px;font-size:14px;line-height:16px;color:#111;font-weight:normal;letter-spacing:0px;transform:scaleX(0.86);transform-origin:0 0">STD</div>
<div style="position:absolute;left:734px;top:0;width:43px;height:600px;overflow:hidden">
<div class="t" style="left:0px;top:285.9px;font-size:14px;line-height:16px;color:#111;font-weight:normal;letter-spacing:0px;transform:scaleX(0.87);transform-origin:0 0">BASE</div>
</div>
<div class="t" style="left:784.5px;top:285.9px;font-size:14px;line-height:16px;color:#222;font-weight:normal;letter-spacing:-0.3px;">1 взр.</div>
<div style="position:absolute;left:879px;top:0;width:37px;height:600px;overflow:hidden">
<div class="b" style="left:0px;top:283px;width:50px;height:20px;background:rgba(60,200,110,0.42);border:1px solid rgba(40,180,90,0.55);border-radius:3px"></div>
<div class="t" style="left:7px;top:285.9px;font-size:14px;line-height:16px;color:#5e8a70;font-weight:normal;letter-spacing:-0.4px;">Прож</div>
</div>
</div>
<div class="b" style="left:241px;top:311px;width:36px;height:33px;border:3px solid #0a750a;border-radius:2px"></div>
<div class="b" style="left:595px;top:313px;width:54px;height:34px;border:3px solid #0a750a;border-radius:2px"></div>
<div class="b" style="left:242px;top:524px;width:118px;height:1px;background:#b8b8b8"></div>
<div class="b" style="left:1159px;top:524px;width:1px;height:17px;background:#b8b8b8"></div>
<div class="b" style="left:1159px;top:524px;width:19px;height:1px;background:#b8b8b8"></div>
<div class="b" style="left:275px;top:186px;width:1px;height:25px;background:#b8b8b8"></div>
<div class="b" style="left:597px;top:186px;width:1px;height:25px;background:#b8b8b8"></div>
<div class="b" style="left:710px;top:186px;width:1px;height:25px;background:#b8b8b8"></div>
<div class="b" style="left:795px;top:186px;width:1px;height:25px;background:#b8b8b8"></div>
<div class="b" style="left:884px;top:186px;width:1px;height:25px;background:#b8b8b8"></div>
<div class="b" style="left:973px;top:186px;width:1px;height:25px;background:#b8b8b8"></div>
<div class="b" style="left:1022px;top:186px;width:1px;height:25px;background:#b8b8b8"></div>
<div class="b" style="left:1117px;top:186px;width:1px;height:25px;background:#b8b8b8"></div>
<div class="b" style="left:1159px;top:186px;width:1px;height:25px;background:#b8b8b8"></div>
<div class="b" style="left:357px;top:186px;width:1px;height:355px;background:#b8b8b8"></div>
<div class="b" style="left:359px;top:186px;width:1px;height:355px;background:#b8b8b8"></div>
<div class="b" style="left:251px;top:192px;width:14px;height:14px;background:#fff;border:1px solid #c6c6c6"></div>
<div class="b" style="left:254px;top:195px;width:8px;height:8px;background:#333"></div>
<div class="t" style="left:280px;top:192.3px;font-size:14px;line-height:16px;color:#333;font-weight:normal;letter-spacing:-0.1px;transform:scaleX(0.95);transform-origin:0 0">№</div>
<div class="t" style="left:364.5px;top:192.3px;font-size:14px;line-height:16px;color:#333;font-weight:normal;letter-spacing:-0.1px;transform:scaleX(0.95);transform-origin:0 0">Имя гостя</div>
<div class="t" style="left:602.5px;top:192.3px;font-size:14px;line-height:16px;color:#333;font-weight:normal;letter-spacing:-0.1px;transform:scaleX(0.95);transform-origin:0 0">Комната</div>
<div class="t" style="left:715.5px;top:192.3px;font-size:14px;line-height:16px;color:#333;font-weight:normal;letter-spacing:-0.1px;transform:scaleX(0.95);transform-origin:0 0">Дата заезда</div>
<div class="t" style="left:800px;top:192.3px;font-size:14px;line-height:16px;color:#333;font-weight:normal;letter-spacing:-0.1px;transform:scaleX(0.95);transform-origin:0 0">Дата выезда</div>
<div class="t" style="left:889px;top:192.3px;font-size:14px;line-height:16px;color:#333;font-weight:normal;letter-spacing:-0.1px;transform:scaleX(0.95);transform-origin:0 0">Тип комнаты</div>
<div class="t" style="left:978px;top:192.3px;font-size:14px;line-height:16px;color:#333;font-weight:normal;letter-spacing:-0.1px;transform:scaleX(0.95);transform-origin:0 0">Тариф</div>
<div class="t" style="left:1027px;top:192.3px;font-size:14px;line-height:16px;color:#333;font-weight:normal;letter-spacing:-0.1px;transform:scaleX(0.95);transform-origin:0 0">Кол-во гостей</div>
<div style="position:absolute;left:1122px;top:186px;width:37px;height:25px;overflow:hidden">
<div class="t" style="left:0.8px;top:6.300000000000011px;font-size:14px;line-height:16px;color:#333;font-weight:normal;letter-spacing:-0.1px;transform:scaleX(0.95);transform-origin:0 0">Статус</div>
</div>
<svg style="left:697px;top:195px" width="8" height="5" viewBox="0 0 8 5"><path d="M0 5 L4 0 L8 5Z" fill="#bbb"/></svg>
<svg style="left:1164px;top:240px" width="7" height="5" viewBox="0 0 7 5"><path d="M0 4.5 L3.5 0.5 L7 4.5Z" fill="#666"/></svg>
<svg style="left:1164px;top:515px" width="7" height="5" viewBox="0 0 7 5"><path d="M0 0.5 L3.5 4.5 L7 0.5Z" fill="#666"/></svg>
<div class="b" style="left:1165px;top:434px;width:4px;height:44px;background:#c8c8c8"></div>
<svg style="left:364px;top:529px" width="5" height="7" viewBox="0 0 5 7"><path d="M4.5 0 L0.5 3.5 L4.5 7Z" fill="#666"/></svg>
<svg style="left:1150px;top:529px" width="5" height="7" viewBox="0 0 5 7"><path d="M0.5 0 L4.5 3.5 L0.5 7Z" fill="#666"/></svg>
<div class="b" style="left:372px;top:530px;width:580px;height:4px;background:#cfcfcf"></div>
<div class="t" style="left:262.5px;top:555.6px;font-size:14px;line-height:16px;color:#333;font-weight:normal;letter-spacing:-0.15px;">Броней: 56</div>
<div class="t" style="left:900px;width:256px;text-align:right;top:557px;font-size:14px;line-height:16px;color:#333;letter-spacing:0.1px">К-во гостей: 60+1</div>
<div class="b" style="left:249px;top:593px;width:14px;height:14px;background:#fff;border:1px solid #999"></div>
<svg style="left:251px;top:595px" width="11" height="10" viewBox="0 0 11 10"><path d="M1.2 5 L4 8 L9.8 1.5" fill="none" stroke="#222" stroke-width="1.8"/></svg>
<div class="t" style="left:269.5px;top:593px;font-size:14px;line-height:16px;color:#333;font-weight:normal;letter-spacing:-0.15px;transform:scaleX(0.9);transform-origin:0 0">[Статус] В ('IN', 'RES')</div>
<svg style="left:397px;top:598px" width="6" height="4" viewBox="0 0 6 4"><path d="M0 0 L6 0 L3 3.5Z" fill="#444"/></svg>
<svg style="left:1133px;top:592px" width="15" height="16" viewBox="0 0 15 16"><path d="M0.3 14.8 L0.5 10.6 L9.8 1.3 Q11 0.1 12.2 1.3 L13.6 2.7 Q14.8 3.9 13.6 5.1 L4.3 14.4 Z" fill="#b9b9b9"/><path d="M1.5 13.6 L1.6 11.2 L3.8 13.4 Z" fill="#fff"/><path d="M2.2 10.4 L9.4 3.2 L11.7 5.5 L4.5 12.7 Z" fill="#fff"/><path d="M3.4 11.5 L10.5 4.4" stroke="#d0d0d0" stroke-width="0.7"/></svg>
<svg style="left:1154px;top:592px" width="16" height="16" viewBox="0 0 16 16"><circle cx="8" cy="8.1" r="7.9" fill="#b8b8b8"/><path d="M4.9 5 L11.1 11.2 M11.1 5 L4.9 11.2" stroke="#fff" stroke-width="2.8" stroke-linecap="butt"/></svg>
</body></html>
